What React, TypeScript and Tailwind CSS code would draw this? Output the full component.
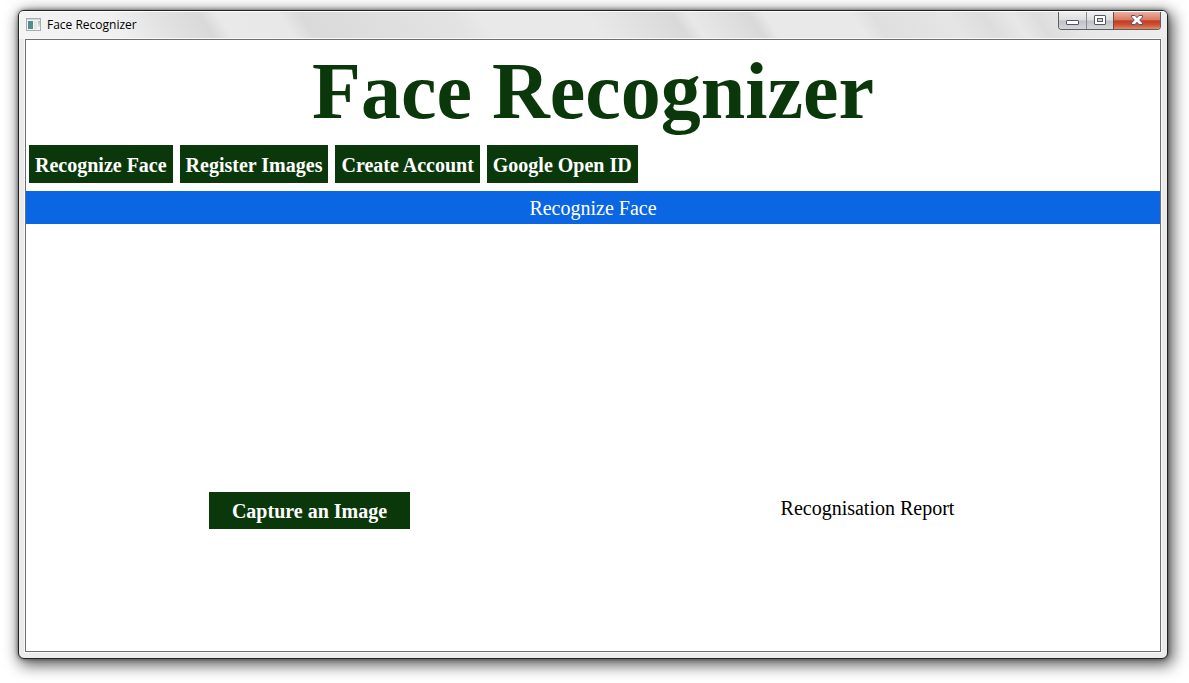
const navItems = ["Recognize Face", "Register Images", "Create Account", "Google Open ID"];

function AppIcon() {
  return (
    <svg width="15" height="13" viewBox="0 0 15 13" aria-hidden="true" shapeRendering="crispEdges">
      <defs>
        <linearGradient id="screen" x1="0" y1="0" x2="1" y2="1">
          <stop offset="0" stopColor="#4f86a8" />
          <stop offset="1" stopColor="#4f9a68" />
        </linearGradient>
        <linearGradient id="side" x1="0" y1="0" x2="0" y2="1">
          <stop offset="0" stopColor="#8fcfae" />
          <stop offset="1" stopColor="#e6eaf0" />
        </linearGradient>
      </defs>
      <rect x="0.5" y="0.5" width="14" height="12" fill="#f4f4f6" stroke="#a9acb4" />
      <rect x="1" y="1" width="13" height="1" fill="#d3d6dc" />
      <rect x="2" y="3" width="5" height="8" fill="url(#screen)" />
      <rect x="8" y="3" width="3" height="8" fill="#e6e6e8" />
      <rect x="12" y="3" width="2" height="6" fill="url(#side)" />
    </svg>
  );
}

function WindowControls() {
  return (
    <div className="mr-[6px] flex h-[18px] overflow-hidden rounded-b-[4px] border border-t-0 border-[#5c5f66]">
      <button
        aria-label="Minimize"
        className="flex w-7 items-center justify-center border-r border-[#8b8d92] bg-[linear-gradient(#f0f0f0_0%,#dcdddf_48%,#bfc1c5_52%,#d6d7d9_100%)]"
      >
        <svg width="13" height="15" viewBox="0 0 13 15" aria-hidden="true">
          <rect x="0.5" y="7.5" width="12" height="4" rx="0.5" fill="#fff" stroke="#53566b" />
        </svg>
      </button>
      <button
        aria-label="Maximize"
        className="flex w-[27px] items-center justify-center border-r border-[#6b4a4a] bg-[linear-gradient(#f0f0f0_0%,#dcdddf_48%,#bfc1c5_52%,#d6d7d9_100%)]"
      >
        <svg width="12" height="11" viewBox="0 0 12 11" aria-hidden="true">
          <rect x="0.5" y="0.5" width="11" height="9" rx="0.5" fill="#fff" stroke="#53566b" />
          <rect x="3.5" y="3.5" width="5" height="3" fill="#d5d7db" stroke="#53566b" />
        </svg>
      </button>
      <button
        aria-label="Close"
        className="flex w-[46px] items-center justify-center bg-[linear-gradient(#eab0a2_0%,#d97a66_46%,#c13c22_52%,#cf5034_75%,#e08a62_100%)]"
      >
        <svg width="12" height="11" viewBox="0 0 12 11" aria-hidden="true">
          <path
            d="M.5.5h3.500l2 2.200L8 .5h3.500v1.500L8.700 5l2.800 3v1.500H8l-2-2.200-2 2.200H.5V8l2.800-3L.5 2z"
            fill="#fff"
            stroke="#53566b"
            strokeWidth="1"
            strokeLinejoin="round"
          />
        </svg>
      </button>
    </div>
  );
}

export default function App() {
  return (
    <div className="flex min-h-screen flex-col bg-white pt-[10px] pr-[21px] pb-6 pl-[18px]">
      <div className="flex flex-1 flex-col rounded-[6px] border border-[#222] bg-[#ebebeb] shadow-[0_0_4px_rgba(0,0,0,0.5),3px_4px_15px_2px_rgba(0,0,0,0.65)]">
        <header className="flex h-7 items-start justify-between rounded-t-[5px] border-t border-l border-white bg-[linear-gradient(56deg,#f4f4f4_0%,#f0f0f0_9%,#e2e2e2_13%,#d9d9d9_16.8%,#e9e9e9_18.3%,#e8e8e8_23.6%,#dadada_25.4%,#e3e3e3_38.6%,#e9e9e9_40.8%,#e9e9e9_50%,#d9d9d9_57.4%,#e8e8e8_58.8%,#d9d9d9_64%,#e9e9e9_65.3%,#e9e9e9_72.8%,#dfdfdf_74.5%,#e5e5e5_81%,#dddddd_84%,#e8e8e8_86.5%,#dddddd_88.5%,#e8e8e8_92%,#eeeeee_100%)]">
          <div className="flex h-6 items-center gap-[6px] pl-[6px]">
            <AppIcon />
            <span className="pt-px font-['Open_Sans',sans-serif] text-[12px] leading-4 text-black">Face Recognizer</span>
          </div>
          <WindowControls />
        </header>
        <main className="mx-[6px] mb-[6px] flex flex-1 flex-col border border-[#6f6f6f] bg-white font-['Liberation_Serif',serif] text-[20px] leading-6 outline outline-[#f8f8f8]">
          <h1 className="pt-[3px] text-center text-[80px] leading-[96px] font-bold text-[#0b380b]">Face Recognizer</h1>
          <nav className="mt-[6px] flex flex-wrap gap-[7px] px-[3px]">
            {navItems.map((item) => (
              <button key={item} className="bg-[#0b380b] px-[6px] pt-2 pb-[6px] font-bold text-white">
                {item}
              </button>
            ))}
          </nav>
          <h2 className="mt-2 bg-[#0a66e2] pt-[5px] pb-[4px] text-center text-white">Recognize Face</h2>
          <div className="grid flex-1 grid-cols-2 items-start pt-[268px] pb-6">
            <div className="flex justify-center">
              <button className="bg-[#0b380b] px-[23px] pt-[7px] pb-[6px] font-bold text-white">Capture an Image</button>
            </div>
            <p className="pt-1 pr-[18px] text-center text-black">Recognisation Report</p>
          </div>
        </main>
      </div>
    </div>
  );
}
